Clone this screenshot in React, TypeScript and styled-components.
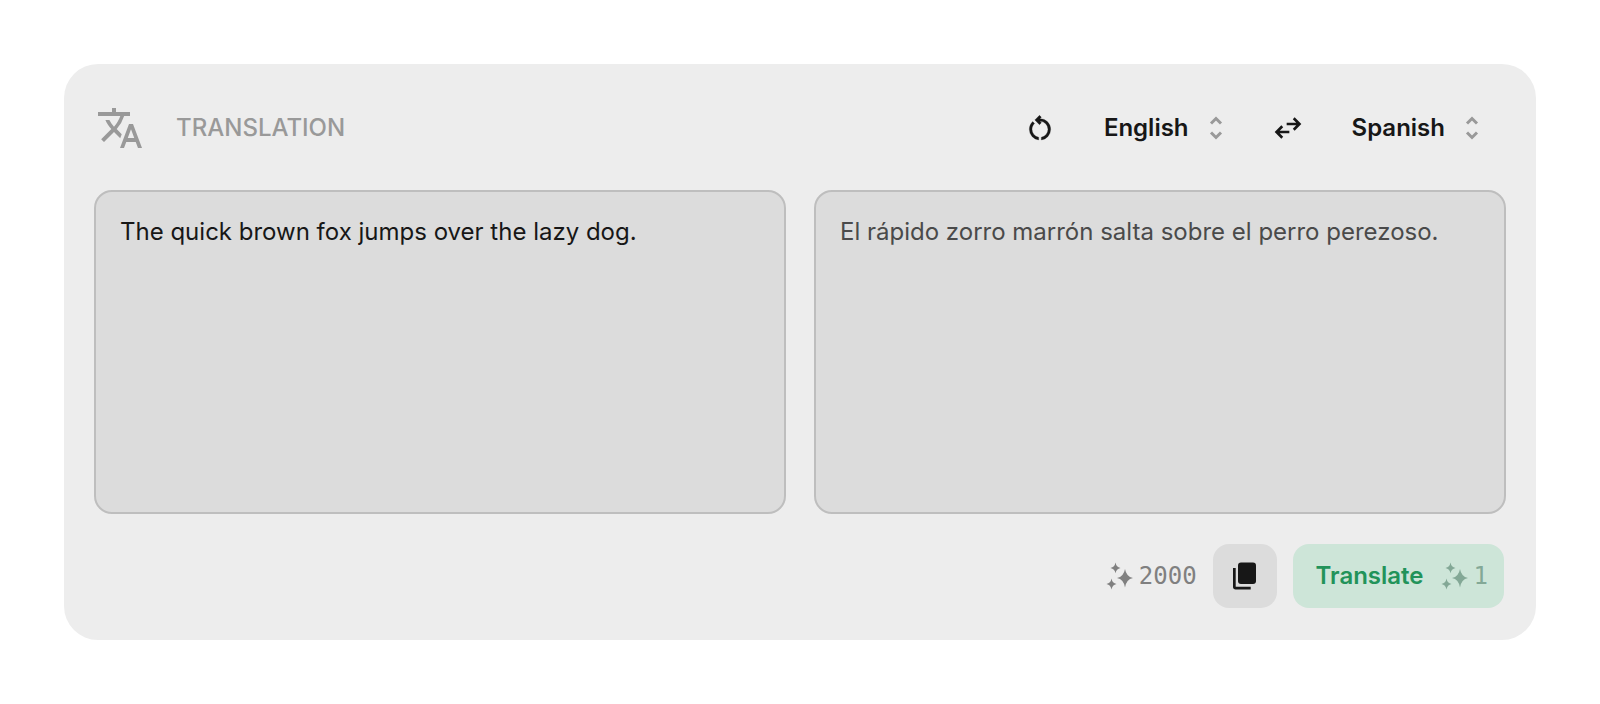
import React, { useState } from "react";
import styled, { createGlobalStyle } from "styled-components";
import { MdTranslate } from "react-icons/md";

const GlobalStyle = createGlobalStyle`
  *, *::before, *::after { box-sizing: border-box; }
  body {
    margin: 0;
    background: #ffffff;
    color: #171717;
    font-family: Inter, "Liberation Sans", sans-serif;
  }
  button, select, textarea { font: inherit; color: inherit; }
`;

const Page = styled.main`
  padding: 64px;
`;

const Card = styled.section`
  display: flex;
  flex-direction: column;
  padding: 30px;
  border-radius: 34px;
  background: #ededed;
`;

const Header = styled.header`
  display: flex;
  align-items: center;
  justify-content: space-between;
  height: 68px;
  padding: 0 26px 0 2px;
`;

const Title = styled.h1`
  display: flex;
  align-items: center;
  gap: 32px;
  margin: 0;
  color: #999999;
  font-size: 24px;
  line-height: 32px;
  font-weight: 500;
`;

const Languages = styled.div`
  display: flex;
  align-items: center;
  gap: 32px;
`;

const IconButton = styled.button`
  display: flex;
  padding: 16px;
  border: 0;
  background: none;
  cursor: pointer;
`;

const Picker = styled.label`
  display: grid;
  align-items: center;

  & > * { grid-area: 1 / 1; }
  & > svg { justify-self: end; color: #999999; pointer-events: none; }
`;

const LanguageSelect = styled.select`
  appearance: none;
  field-sizing: content;
  padding: 0 35px 0 0;
  border: 0;
  background: none;
  font-size: 24px;
  line-height: 32px;
  font-weight: 600;
  cursor: pointer;
`;

const Panes = styled.div`
  display: grid;
  grid-template-columns: 1fr 1fr;
  gap: 28px;
  margin-top: 28px;
`;

const Pane = styled.textarea`
  display: block;
  width: 100%;
  height: 324px;
  padding: 24px;
  border: 2px solid #bebebe;
  border-radius: 18px;
  outline: 0;
  resize: none;
  background: #dcdcdc;
  color: ${({ readOnly }) => (readOnly ? "#4a4a4a" : "#171717")};
  font-size: 24px;
  line-height: 32px;
`;

const Footer = styled.footer`
  display: flex;
  align-items: center;
  justify-content: flex-end;
  gap: 16px;
  margin-top: 30px;
  padding: 0 2px 2px 0;
`;

const Credits = styled.span<{ $tint: string }>`
  display: flex;
  align-items: center;
  gap: 6px;
  color: ${({ $tint }) => $tint};
  font-family: "DejaVu Sans Mono", monospace;
  font-size: 24px;
  line-height: 32px;
  font-weight: 400;
`;

const CopyButton = styled.button`
  display: flex;
  padding: 16px;
  border: 0;
  border-radius: 16px;
  background: #dcdcdc;
  cursor: pointer;
`;

const TranslateButton = styled.button`
  display: flex;
  align-items: center;
  gap: 16px;
  height: 64px;
  padding: 0 16px 0 23px;
  border: 0;
  border-radius: 16px;
  background: #cde5d8;
  color: #22935a;
  font-size: 24px;
  line-height: 32px;
  font-weight: 600;
  cursor: pointer;
`;

const RestartIcon = () => (
  <svg
    width="32"
    height="32"
    viewBox="0 0 24 24"
    fill="currentColor"
    stroke="currentColor"
    strokeWidth="0.2"
    aria-hidden="true"
  >
    <path d="M11 20.95q-3.025-.375-5.012-2.637T4 13q0-1.65.65-3.162T6.5 7.2l1.425 1.425q-.95.85-1.437 1.975T6 13q0 2.2 1.4 3.888T11 18.95v2Zm2 0v-2q2.175-.4 3.588-2.075T18 13q0-2.5-1.75-4.25T12 7h-.075l1.1 1.1l-1.4 1.4l-3.5-3.5l3.5-3.5l1.4 1.4l-1.1 1.1H12q3.35 0 5.675 2.325T20 13q0 2.975-1.988 5.313T13 20.95Z" />
  </svg>
);

const SwapIcon = () => (
  <svg width="32" height="32" viewBox="0 0 24 24" fill="currentColor" aria-hidden="true">
    <path d="M7 20l-5-5l5-5l1.4 1.425L5.825 14H13v2H5.825L8.4 18.575zm10-6l-1.4-1.425L18.175 10H11V8h7.175L15.6 5.425L17 4l5 5z" />
  </svg>
);

const UnfoldIcon = () => (
  <svg width="16" height="32" viewBox="0 0 16 32" fill="none" stroke="currentColor" strokeWidth="3" aria-hidden="true">
    <path d="M3 11.500l5-5l5 5M3 20.500l5 5l5-5" />
  </svg>
);

const SparkleIcon = () => (
  <svg width="28" height="32" viewBox="0 0 28 32" fill="currentColor" aria-hidden="true">
    <path d="M20 9Q21.300 16.700 28 18Q21.300 19.300 20 27.500Q18.700 19.300 12 18Q18.700 16.700 20 9Z" />
    <path d="M10.500 2.500Q11.300 7.100 15.500 7.900Q11.300 8.700 10.500 13.300Q9.700 8.700 5.500 7.900Q9.700 7.100 10.500 2.500Z" />
    <path d="M6.500 18.500Q7.300 23.200 11.500 24Q7.300 24.800 6.500 29.500Q5.700 24.800 1.500 24Q5.700 23.200 6.500 18.500Z" />
  </svg>
);

const CopyIcon = () => (
  <svg width="32" height="32" viewBox="0 0 32 32" fill="currentColor" aria-hidden="true">
    <rect x="9" y="2.500" width="18" height="21.500" rx="3" />
    <path d="M4 8h2.700v18.700h15v2.700h-15q-2.700 0-2.700-2.700z" />
  </svg>
);

const languages = ["English", "Spanish", "French", "German"];

interface LanguagePickerProps {
  label: string;
  value: string;
  onChange: (language: string) => void;
}

const LanguagePicker = ({ label, value, onChange }: LanguagePickerProps) => (
  <Picker>
    <LanguageSelect aria-label={label} value={value} onChange={(e) => onChange(e.target.value)}>
      {languages.map((language) => (
        <option key={language}>{language}</option>
      ))}
    </LanguageSelect>
    <UnfoldIcon />
  </Picker>
);

export default function App() {
  const [source, setSource] = useState("English");
  const [target, setTarget] = useState("Spanish");
  const [text, setText] = useState("The quick brown fox jumps over the lazy dog.");
  const result = "El rápido zorro marrón salta sobre el perro perezoso.";

  const swap = () => {
    setSource(target);
    setTarget(source);
  };

  return (
    <>
      <GlobalStyle />
      <Page>
        <Card>
          <Header>
            <Title>
              <MdTranslate size={48} aria-hidden="true" />
              TRANSLATION
            </Title>
            <Languages>
              <IconButton type="button" aria-label="Reset" onClick={() => setText("")}>
                <RestartIcon />
              </IconButton>
              <LanguagePicker label="From" value={source} onChange={setSource} />
              <IconButton type="button" aria-label="Swap languages" onClick={swap}>
                <SwapIcon />
              </IconButton>
              <LanguagePicker label="To" value={target} onChange={setTarget} />
            </Languages>
          </Header>
          <Panes>
            <Pane aria-label="Source text" spellCheck={false} value={text} onChange={(e) => setText(e.target.value)} />
            <Pane aria-label="Translated text" readOnly value={result} />
          </Panes>
          <Footer>
            <Credits $tint="#808080">
              <SparkleIcon />
              2000
            </Credits>
            <CopyButton type="button" aria-label="Copy translation">
              <CopyIcon />
            </CopyButton>
            <TranslateButton type="button">
              Translate
              <Credits $tint="#83a896">
                <SparkleIcon />1
              </Credits>
            </TranslateButton>
          </Footer>
        </Card>
      </Page>
    </>
  );
}
